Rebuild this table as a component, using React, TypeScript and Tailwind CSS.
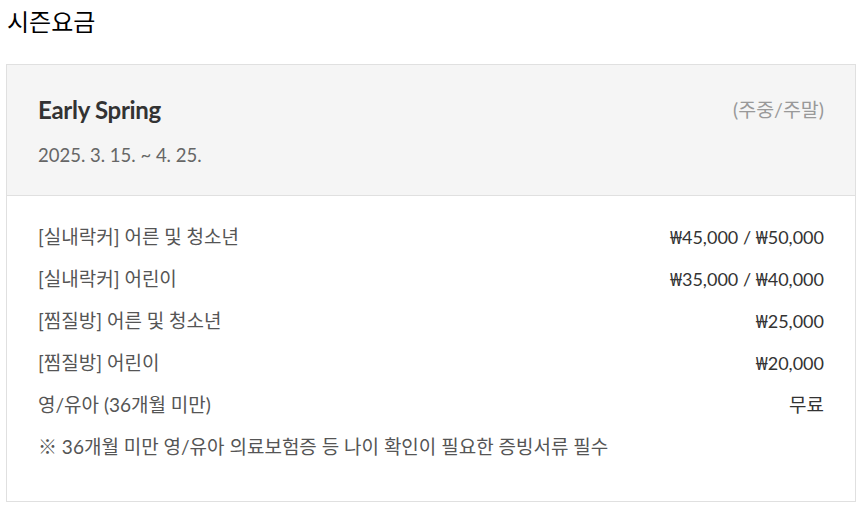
import React from "react";

const rows: [string, string[]][] = [
  ["[실내락커] 어른 및 청소년", ["45,000", "50,000"]],
  ["[실내락커] 어린이", ["35,000", "40,000"]],
  ["[찜질방] 어른 및 청소년", ["25,000"]],
  ["[찜질방] 어린이", ["20,000"]],
];

function Won() {
  return (
    <span
      className="font-normal tracking-[-1px] mr-[1px]"
      style={{ fontFamily: '"Noto Sans", Roboto, "DejaVu Sans", sans-serif' }}
    >
      ₩
    </span>
  );
}

function Price({ values }: { values: string[] }) {
  return (
    <span className="text-[#333] text-[18px] leading-[42px]">
      {values.map((v, i) => (
        <React.Fragment key={v}>
          {i > 0 && " / "}
          <Won />
          {v}
        </React.Fragment>
      ))}
    </span>
  );
}

export default function App() {
  return (
    <div
      className="bg-white w-[867px] h-[513px]"
      style={{ fontFamily: 'Lato, "Noto Sans CJK KR", sans-serif' }}
    >
      <h1
        className="pl-[7px] pt-[4px] h-[64px] text-[24px] leading-[34px] text-black"
        style={{ fontFamily: '"Noto Sans CJK KR", sans-serif' }}
      >
        시즌요금
      </h1>
      <div className="ml-[6px] w-[850px] h-[438px] border border-[#e0e0e0]">
        <div className="bg-[#f5f5f5] border-b border-[#e0e0e0] h-[131px] px-[31px] pt-[28px] flex justify-between">
          <div>
            <div className="text-[24px] leading-[34px] font-bold text-[#333] tracking-[-0.3px]">Early Spring</div>
            <div className="mt-[15px] text-[18.5px] leading-[26px] text-[#666]">2025. 3. 15. ~ 4. 25.</div>
          </div>
          <div className="text-[19.5px] leading-[34px] text-[#999]">(주중/주말)</div>
        </div>
        <div className="px-[31px] pt-[20px]">
          {rows.map(([l, r]) => (
            <div key={l} className="flex justify-between items-center h-[42px] text-[19px] leading-[42px]">
              <span className="text-[#555]">{l}</span>
              <Price values={r} />
            </div>
          ))}
          <div className="flex justify-between items-center h-[42px] text-[19px] leading-[42px]">
            <span className="text-[#555]">영/유아 (36개월 미만)</span>
            <span className="text-[#333]">무료</span>
          </div>
          <div className="h-[42px] text-[19px] leading-[42px] text-[#555]">
            ※ 36개월 미만 영/유아 의료보험증 등 나이 확인이 필요한 증빙서류 필수
          </div>
        </div>
      </div>
    </div>
  );
}
